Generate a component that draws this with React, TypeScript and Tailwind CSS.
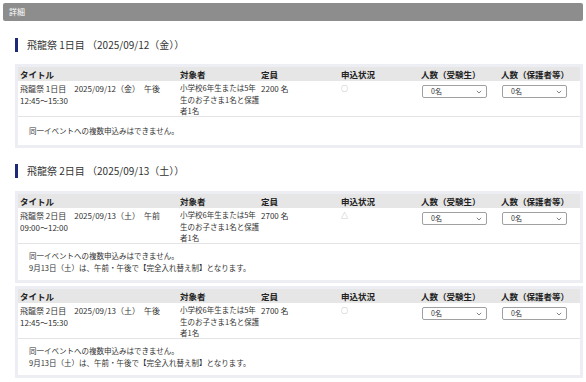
import React from "react";

type Row = {
  title1: string;
  title2: string;
  cap: string;
  status: string;
  notes: string[];
};

const font = { fontFamily: '"Noto Sans CJK JP", "Noto Sans", sans-serif' };

function Select() {
  return (
    <div className="flex items-center justify-between w-[65px] h-[13px] border border-[#a0a0a0] rounded-[2px] bg-white pl-[8px] pr-[4px] text-[7px] text-[#333]">
      <span>0名</span>
      <svg width="6" height="4" viewBox="0 0 6 4"><path d="M0.8 0.8 L3 3 L5.2 0.8" fill="none" stroke="#666" strokeWidth="0.8" /></svg>
    </div>
  );
}

function Table({ row }: { row: Row }) {
  return (
    <div className="bg-[#eceef4] p-[3px]">
      <div className="bg-white">
        <div className="grid grid-cols-[160px_81px_80px_80px_80px_1fr] h-[14px] bg-[#e6e6e6] items-center text-[8.5px] font-bold text-[#222] leading-[12px]">
          <div className="pl-[2px]">タイトル</div>
          <div className="pl-[2px]">対象者</div>
          <div className="pl-[2px]">定員</div>
          <div className="pl-[2px]">申込状況</div>
          <div className="pl-[2px]">人数（受験生）</div>
          <div className="pl-[2px]">人数（保護者等）</div>
        </div>
        <div className="grid grid-cols-[160px_81px_80px_80px_80px_1fr] h-[36px] text-[8px] text-[#333] leading-[11.5px] border-b border-[#e4e4e4]">
          <div className="pl-[2px] pt-[2px] whitespace-nowrap min-w-0">
            <div>{row.title1}</div>
            <div>{row.title2}</div>
          </div>
          <div className="pl-[2px] pt-[1px] whitespace-nowrap min-w-0 text-[7.5px]">
            <div>小学校6年生または5年</div>
            <div>生のお子さま1名と保護</div>
            <div>者1名</div>
          </div>
          <div className="pl-[2px] pt-[2px]">{row.cap}</div>
          <div className="pl-[2px] pt-[2px] text-[#999] text-[7px]">{row.status}</div>
          <div className="pl-[3px] pt-[4px]"><Select /></div>
          <div className="pl-[3px] pt-[4px]"><Select /></div>
        </div>
        <div className="min-h-[28px] flex flex-col justify-center py-[6px] pl-[11px] text-[7.5px] leading-[12px] text-[#333]">
          {row.notes.map((n, i) => (
            <div key={i}>{n}</div>
          ))}
        </div>
      </div>
    </div>
  );
}

function Heading({ text }: { text: string }) {
  return (
    <div className="flex items-center h-[14px] gap-[9px]">
      <div className="w-[3px] h-[14px] bg-[#1c2a78]" />
      <div className="text-[10px] text-[#333] leading-[14px]">{text}</div>
    </div>
  );
}

export default function App() {
  const note1 = "同一イベントへの複数申込みはできません。";
  const note2 = "9月13日（土）は、午前・午後で【完全入れ替え制】となります。";
  return (
    <div className="w-[586px] h-[382px] bg-white overflow-hidden pt-[3px]" style={font}>
      <div className="mx-[3px] h-[18px] bg-[#8d8d8d] rounded-[2px] flex items-center pl-[6px] text-[8px] text-white">
        詳細
      </div>
      <div className="ml-[15px] mr-[3px]">
        <div className="mt-[17px]">
          <Heading text="飛龍祭 1日目 （2025/09/12（金））" />
        </div>
        <div className="mt-[12px]">
          <Table
            row={{
              title1: "飛龍祭 1日目　2025/09/12（金）　午後",
              title2: "12:45〜15:30",
              cap: "2200 名",
              status: "○",
              notes: [note1],
            }}
          />
        </div>
        <div className="mt-[16px]">
          <Heading text="飛龍祭 2日目 （2025/09/13（土））" />
        </div>
        <div className="mt-[13px] flex flex-col gap-[3px]">
          <Table
            row={{
              title1: "飛龍祭 2日目　2025/09/13（土）　午前",
              title2: "09:00〜12:00",
              cap: "2700 名",
              status: "△",
              notes: [note1, note2],
            }}
          />
          <Table
            row={{
              title1: "飛龍祭 2日目　2025/09/13（土）　午後",
              title2: "12:45〜15:30",
              cap: "2700 名",
              status: "○",
              notes: [note1, note2],
            }}
          />
        </div>
      </div>
    </div>
  );
}
